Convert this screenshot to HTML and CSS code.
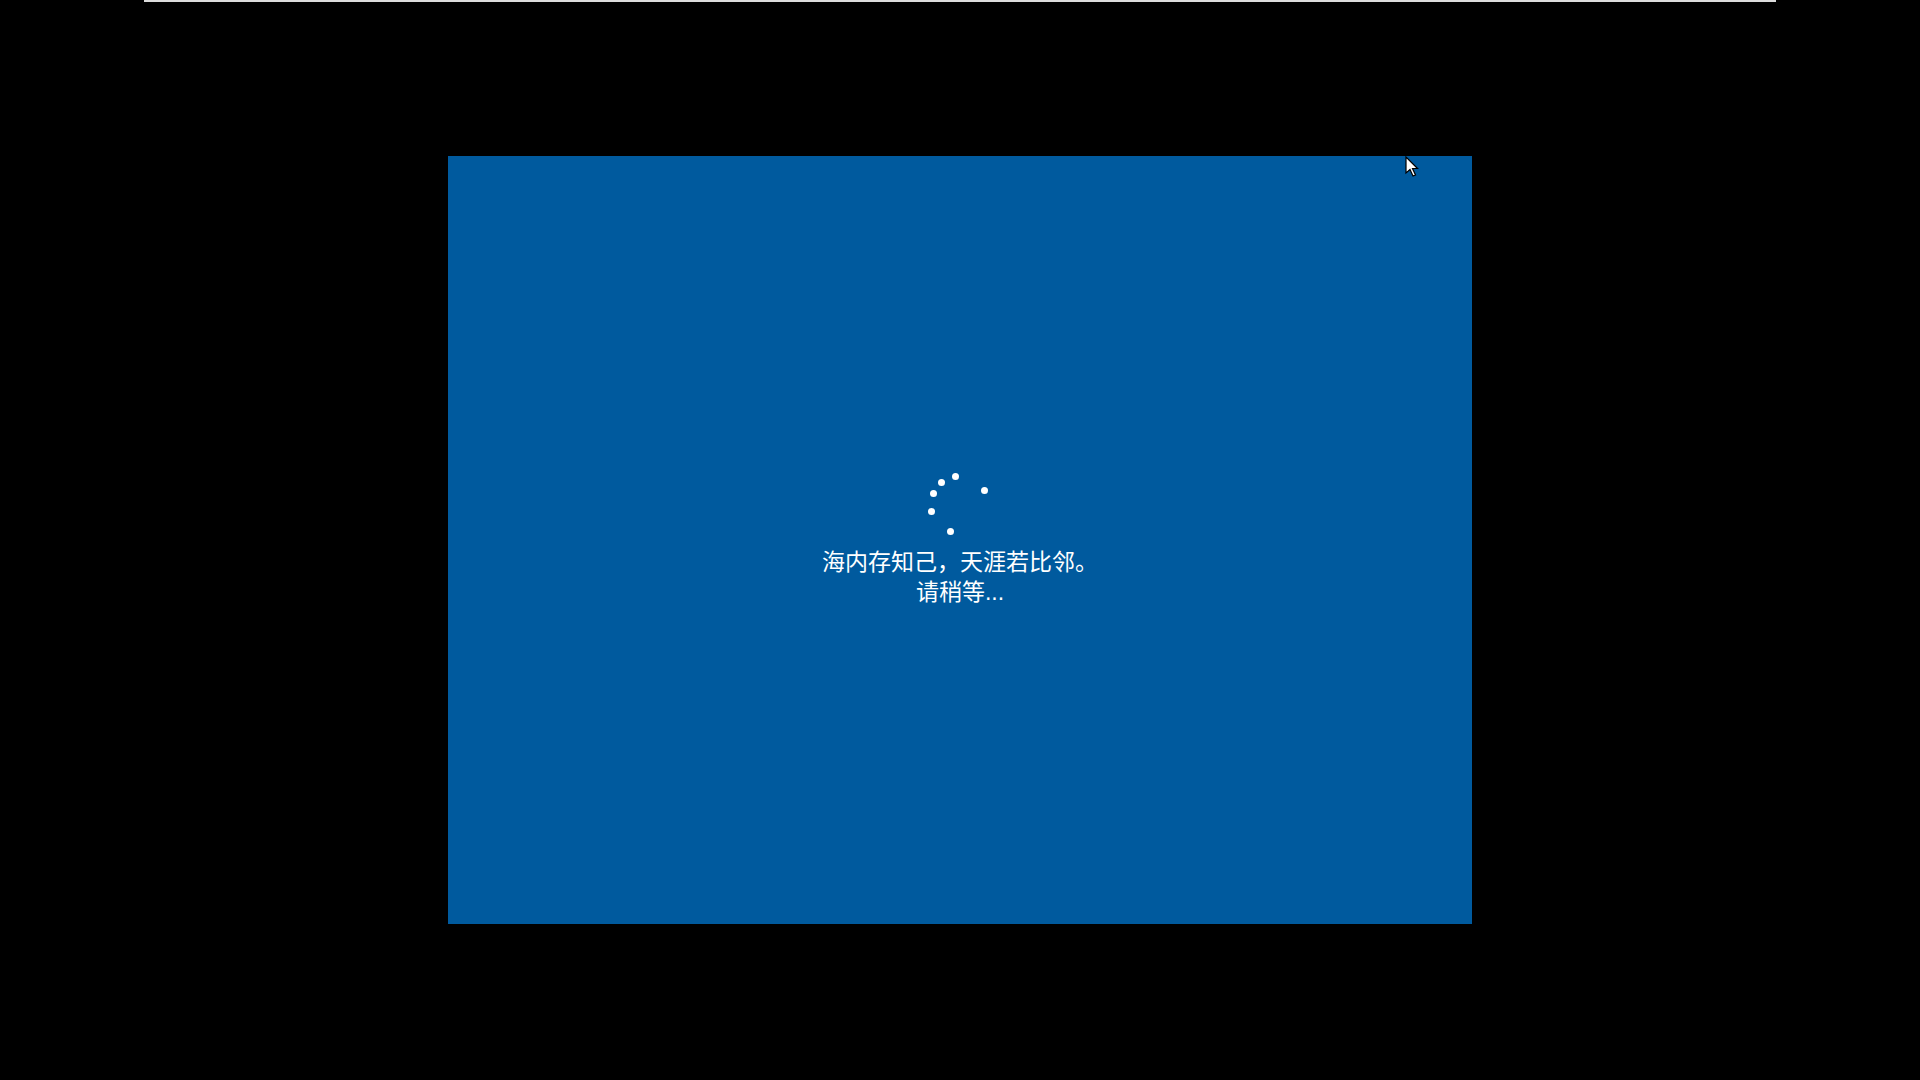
FILE: index.html
```html
<!DOCTYPE html>
<html lang="zh-CN">
<head>
<meta charset="utf-8">
<title>请稍等</title>
<link rel="stylesheet" href="styles.css">
</head>
<body>
<div class="topline"></div>
<div class="screen">
  <div class="spinner">
    <span class="dot d1"></span>
    <span class="dot d2"></span>
    <span class="dot d3"></span>
    <span class="dot d4"></span>
    <span class="dot d5"></span>
    <span class="dot d6"></span>
  </div>
  <div class="msg">
    <div>海内存知己，天涯若比邻。</div>
    <div>请稍等...</div>
  </div>
</div>
<svg class="cursor" width="14" height="22" viewBox="0 0 14 22">
  <path d="M1 1 L1 17 L5 13.5 L8 20 L10.5 19 L7.5 12.5 L12.5 12.5 Z" fill="#fff" stroke="#000" stroke-width="1.2" stroke-linejoin="miter"/>
</svg>
</body>
</html>
```
FILE: styles.css
```css
html, body {
  margin: 0;
  padding: 0;
  background: #000;
  width: 1920px;
  height: 1080px;
  overflow: hidden;
}
body {
  position: relative;
  display: flex;
  flex-direction: column;
  font-family: "Noto Sans CJK SC", "Noto Sans", sans-serif;
}
.topline {
  margin-left: 144px;
  width: 1632px;
  height: 2px;
  background: #dcdcdc;
}
.screen {
  margin-top: 154px;
  margin-left: 448px;
  width: 1024px;
  height: 768px;
  background: #005a9e;
  display: flex;
  flex-direction: column;
  align-items: center;
  box-sizing: border-box;
  padding-top: 316px;
}
.spinner {
  position: relative;
  width: 64px;
  height: 64px;
}
.dot {
  position: absolute;
  width: 7px;
  height: 7px;
  border-radius: 50%;
  background: #fff;
}
.d1 { left: 24px; top: 1px; }
.d2 { left: 10px; top: 7px; }
.d3 { left: 2px; top: 18px; }
.d4 { left: 0; top: 36px; }
.d5 { left: 19px; top: 56px; }
.d6 { left: 53px; top: 15px; }
.msg {
  margin-top: 11px;
  color: #fff;
  font-family: "Liberation Sans", "Noto Sans CJK SC", sans-serif;
  font-size: 23px;
  line-height: 30px;
  text-align: center;
}
.cursor {
  position: absolute;
  left: 1405px;
  top: 156px;
}
```
